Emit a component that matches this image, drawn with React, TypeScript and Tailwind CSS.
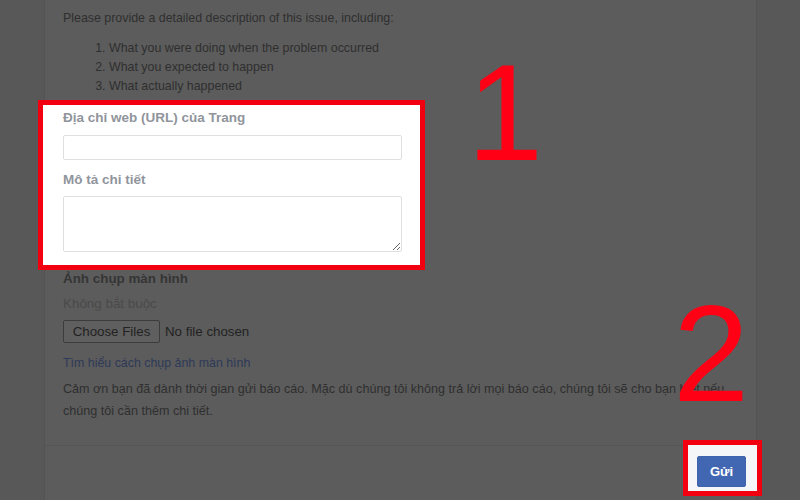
const listItems = [
  'What you were doing when the problem occurred',
  'What you expected to happen',
  'What actually happened',
];

export default function App() {
  return (
    <div className="relative h-[500px] w-[800px] overflow-hidden bg-[#585858] font-['Liberation_Sans',Arial,sans-serif]">
      <div className="ml-[44px] flex h-full w-[713px] flex-col border-x border-[#535353] bg-[#5c5c5c]">
        {/* Body */}
        <div className="px-[18px] pt-[9px] text-[12.4px] text-[#2f2f2f]">
          <p className="leading-[19px]">Please provide a detailed description of this issue, including:</p>
          <ol className="mt-[11px] list-decimal pl-[46px] leading-[19px]">
            {listItems.map((item) => (
              <li key={item}>{item}</li>
            ))}
          </ol>

          {/* Highlighted fields */}
          <div className="-ml-[25px] mt-[4px] w-[387px] border-[5px] border-[#f2000f] bg-white pb-[13px] pl-[20px] pr-[18px] pt-[4px]">
            <label className="block text-[13.5px] font-bold leading-[18px] text-[#90949c]">Địa chỉ web (URL) của Trang</label>
            <input type="text" className="mt-[8px] block h-[25px] w-full rounded-[2px] border border-[#dddfe2] bg-white" />
            <label className="mt-[11px] block text-[13.5px] font-bold leading-[18px] text-[#90949c]">Mô tả chi tiết</label>
            <textarea className="mt-[7px] block h-[56px] w-full rounded-[2px] border border-[#dddfe2] bg-white" />
          </div>

          <div className="text-[13.4px] font-bold leading-[18px] text-[#353535]">Ảnh chụp màn hình</div>
          <div className="mt-[7px] text-[13.4px] leading-[18px] text-[#4a4a4a]">Không bắt buộc</div>
          <div className="mt-[7px] flex items-center gap-[5px]">
            <span className="flex h-[23px] w-[97px] items-center justify-center rounded-[2px] border border-[#3c3c3c] bg-[#5f5f5f] text-[13.3px] text-[#222]">
              Choose Files
            </span>
            <span className="text-[13.3px] text-[#222]">No file chosen</span>
          </div>
          <div className="mt-[11px] leading-[18px] text-[#2e3a58]">Tìm hiểu cách chụp ảnh màn hình</div>
          <p className="mt-[6px] text-[12.6px] leading-[22px] text-[#2f2f2f]">
            Cảm ơn bạn đã dành thời gian gửi báo cáo. Mặc dù chúng tôi không trả lời mọi báo cáo, chúng tôi sẽ cho bạn biết nếu chúng tôi cần thêm chi tiết.
          </p>
        </div>

        {/* Footer */}
        <div className="mt-auto flex h-[55px] justify-end border-t border-[#555] pr-[10px] pt-[10px]">
          <button className="relative z-10 h-[31px] w-[49px] rounded-[2px] border border-[#3f63ad] bg-[#4267b2] text-[13px] font-bold text-white">
            Gửi
          </button>
        </div>
      </div>

      {/* Annotations */}
      <div className="absolute left-[683px] top-[440px] h-[56px] w-[79px] border-[5px] border-[#f2000f] bg-[#f5f6f7]" />
      <div className="absolute left-[467px] top-[44px] text-[137px] leading-none text-[#ff0014]">1</div>
      <div className="absolute left-[673px] top-[285px] text-[137px] leading-none text-[#ff0014]">2</div>
    </div>
  );
}
